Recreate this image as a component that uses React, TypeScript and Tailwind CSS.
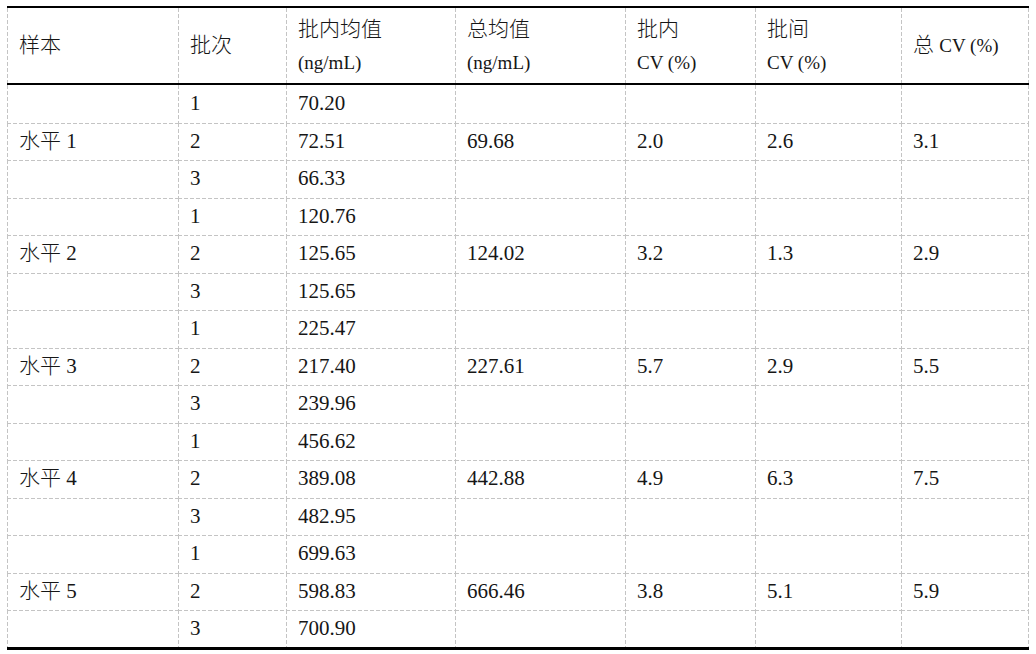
const rows = [
  { level: '水平', n: '1', vals: ['70.20', '72.51', '66.33'], mean: '69.68', cvIn: '2.0', cvBt: '2.6', cvAll: '3.1' },
  { level: '水平', n: '2', vals: ['120.76', '125.65', '125.65'], mean: '124.02', cvIn: '3.2', cvBt: '1.3', cvAll: '2.9' },
  { level: '水平', n: '3', vals: ['225.47', '217.40', '239.96'], mean: '227.61', cvIn: '5.7', cvBt: '2.9', cvAll: '5.5' },
  { level: '水平', n: '4', vals: ['456.62', '389.08', '482.95'], mean: '442.88', cvIn: '4.9', cvBt: '6.3', cvAll: '7.5' },
  { level: '水平', n: '5', vals: ['699.63', '598.83', '700.90'], mean: '666.46', cvIn: '3.8', cvBt: '5.1', cvAll: '5.9' },
];

// dashed grid lines drawn as gradients: left edge + top edge (+ right edge on last column)
const base = 'py-0 pl-[12px] pr-[8px] align-middle text-left font-normal bg-no-repeat';
const lineLT =
  'bg-[image:repeating-linear-gradient(to_bottom,#c4c4c4_0_4px,transparent_4px_6px),repeating-linear-gradient(to_right,#c4c4c4_0_4px,transparent_4px_6px)] bg-[size:1px_100%,100%_1px] bg-[position:left_top,left_top]';
const lineL =
  'bg-[image:repeating-linear-gradient(to_bottom,#c4c4c4_0_4px,transparent_4px_6px)] bg-[size:1px_100%] bg-[position:left_top]';
const lineLTR =
  'bg-[image:repeating-linear-gradient(to_bottom,#c4c4c4_0_4px,transparent_4px_6px),repeating-linear-gradient(to_right,#c4c4c4_0_4px,transparent_4px_6px),repeating-linear-gradient(to_bottom,#c4c4c4_0_4px,transparent_4px_6px)] bg-[size:1px_100%,100%_1px,1px_100%] bg-[position:left_top,left_top,right_top]';
const lineLR =
  'bg-[image:repeating-linear-gradient(to_bottom,#c4c4c4_0_4px,transparent_4px_6px),repeating-linear-gradient(to_bottom,#c4c4c4_0_4px,transparent_4px_6px)] bg-[size:1px_100%,1px_100%] bg-[position:left_top,right_top]';

const head = `${base} border-t-2 border-b-2 border-black`;
const cjk = 'font-light';

function Two({ top, bottom }: { top: string; bottom: string }) {
  return (
    <div className="flex flex-col gap-[13px]">
      <span className={cjk}>{top}</span>
      <span className="text-[19px]">{bottom}</span>
    </div>
  );
}

export default function App() {
  return (
    <div
      className="bg-white w-[1036px] h-[654px] pt-[6px] pl-[7px] text-[#161616]"
      style={{ fontFamily: '"Liberation Serif", "Noto Sans CJK SC", serif' }}
    >
      <table className="border-separate border-spacing-0 w-[1022px] table-fixed text-[21px] leading-none">
        <colgroup>
          <col className="w-[171px]" />
          <col className="w-[108px]" />
          <col className="w-[169px]" />
          <col className="w-[170px]" />
          <col className="w-[130px]" />
          <col className="w-[146px]" />
          <col className="w-[128px]" />
        </colgroup>
        <thead>
          <tr className="h-[79px]">
            <th className={`${head} ${lineL}`}><span className={cjk}>样本</span></th>
            <th className={`${head} ${lineL}`}><span className={cjk}>批次</span></th>
            <th className={`${head} ${lineL}`}><Two top="批内均值" bottom="(ng/mL)" /></th>
            <th className={`${head} ${lineL}`}><Two top="总均值" bottom="(ng/mL)" /></th>
            <th className={`${head} ${lineL}`}><Two top="批内" bottom="CV (%)" /></th>
            <th className={`${head} ${lineL}`}><Two top="批间" bottom="CV (%)" /></th>
            <th className={`${head} ${lineLR}`}>
              <span className={cjk}>总</span> <span className="text-[19px]">CV (%)</span>
            </th>
          </tr>
        </thead>
        <tbody>
          {rows.map((r, gi) =>
            r.vals.map((v, i) => {
              const first = gi === 0 && i === 0;
              const last = gi === rows.length - 1 && i === 2;
              const c = `${base} ${first ? lineL : lineLT} ${last ? 'border-b-[3px] border-black' : ''}`;
              const cr = `${base} ${first ? lineLR : lineLTR} ${last ? 'border-b-[3px] border-black' : ''}`;
              const mid = i === 1;
              return (
                <tr key={`${gi}-${i}`} className={last ? 'h-[40px]' : 'h-[37.5px]'}>
                  <td className={c}>
                    {mid && (
                      <>
                        <span className={cjk}>{r.level}</span> {r.n}
                      </>
                    )}
                  </td>
                  <td className={c}>{i + 1}</td>
                  <td className={c}>{v}</td>
                  <td className={c}>{mid ? r.mean : ''}</td>
                  <td className={c}>{mid ? r.cvIn : ''}</td>
                  <td className={c}>{mid ? r.cvBt : ''}</td>
                  <td className={cr}>{mid ? r.cvAll : ''}</td>
                </tr>
              );
            })
          )}
        </tbody>
      </table>
    </div>
  );
}
